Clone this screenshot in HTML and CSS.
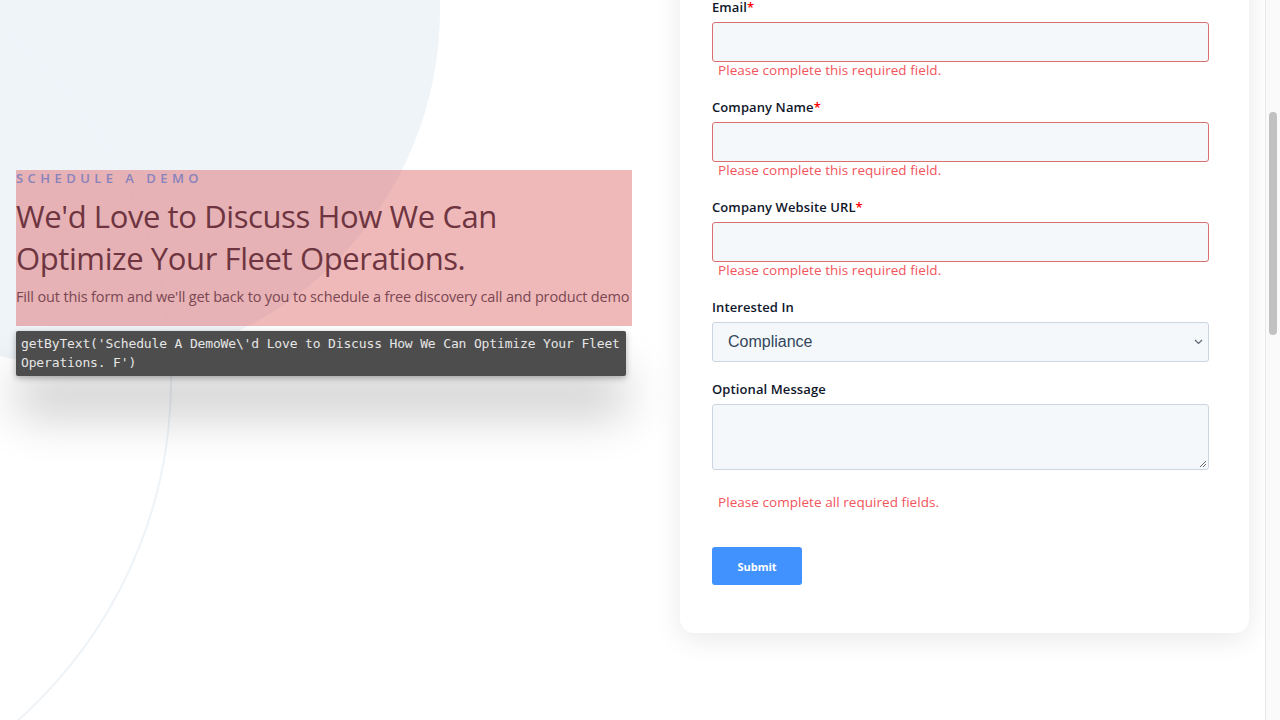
FILE: index.html
```html
<!DOCTYPE html>
<html lang="en">
<head>
<meta charset="utf-8">
<title>Schedule A Demo</title>
<link rel="stylesheet" href="styles.css">
</head>
<body>
<div class="page">
  <main class="main">
    <div class="deco deco-fill"></div>
    <div class="deco deco-ring"></div>

    <section class="intro">
      <div class="intro-text">
        <p class="eyebrow">Schedule A Demo</p>
        <h1 class="title">We'd Love to Discuss How We Can Optimize Your Fleet Operations.</h1>
        <p class="lead">Fill out this form and we'll get back to you to schedule a free discovery call and product demo</p>
      </div>
      <div class="tooltip">getByText('Schedule A DemoWe\'d Love to Discuss How We Can Optimize Your Fleet Operations. F')</div>
    </section>

    <section class="card">
      <form class="form">
        <div class="field">
          <label class="label">Email<span class="req">*</span></label>
          <input class="input input-error" type="email">
          <p class="error">Please complete this required field.</p>
        </div>
        <div class="field">
          <label class="label">Company Name<span class="req">*</span></label>
          <input class="input input-error" type="text">
          <p class="error">Please complete this required field.</p>
        </div>
        <div class="field">
          <label class="label">Company Website URL<span class="req">*</span></label>
          <input class="input input-error" type="text">
          <p class="error">Please complete this required field.</p>
        </div>
        <div class="field field-plain">
          <label class="label">Interested In</label>
          <div class="select">
            <span class="select-value">Compliance</span>
            <svg class="chevron" width="9" height="6" viewBox="0 0 9 6"><path d="M1 1 L4.5 4.5 L8 1" fill="none" stroke="#5b6572" stroke-width="1.2"/></svg>
          </div>
        </div>
        <div class="field field-plain">
          <label class="label">Optional Message</label>
          <div class="textarea">
            <svg class="grip" width="9" height="9" viewBox="0 0 9 9"><path d="M8 2 L2 8 M8 5 L5 8" stroke="#6b6b6b" stroke-width="1"/></svg>
          </div>
        </div>
        <p class="error error-all">Please complete all required fields.</p>
        <button class="submit" type="button">Submit</button>
      </form>
    </section>
  </main>
  <aside class="scrollbar"><div class="thumb"></div></aside>
</div>
</body>
</html>
```

FILE: styles.css
```css
* { box-sizing: border-box; }
html, body { margin: 0; padding: 0; }
body {
  width: 1280px;
  height: 720px;
  overflow: hidden;
  background: #ffffff;
  font-family: "Open Sans", "Liberation Sans", sans-serif;
}
.page {
  display: flex;
  width: 1280px;
  height: 720px;
}
.main {
  position: relative;
  flex: 1;
  display: flex;
  overflow: hidden;
}
.deco {
  position: absolute;
  border-radius: 50%;
  z-index: 0;
}
.deco-fill {
  left: -272px;
  top: -346px;
  width: 712px;
  height: 712px;
  background: #eff4f9;
}
.deco-ring {
  left: -740px;
  top: -76px;
  width: 912px;
  height: 912px;
  border: 2px solid #eef3f8;
}
.intro {
  position: relative;
  z-index: 1;
  width: 680px;
  flex: none;
  padding: 170px 0 0 16px;
}
.intro-text {
  width: 616px;
  height: 156px;
  background: rgba(214, 60, 60, 0.36);
}
.eyebrow {
  margin: 0;
  font-size: 13px;
  line-height: 16px;
  font-weight: 600;
  letter-spacing: 4.45px;
  text-transform: uppercase;
  color: #8882bd;
}
.title {
  margin: 9px 0 0;
  max-width: 540px;
  font-size: 31px;
  line-height: 42px;
  font-weight: 400;
  color: #6e3541;
  letter-spacing: -0.4px;
}
.lead {
  margin: 8px 0 0;
  font-size: 14.5px;
  line-height: 20px;
  color: #7a4753;
  letter-spacing: -0.15px;
  white-space: nowrap;
}
.tooltip {
  margin-top: 5px;
  width: 610px;
  padding: 3px 0 4px 5px;
  background: #4d4d4d;
  color: #e6e6e6;
  border-radius: 2px;
  font-family: "DejaVu Sans Mono", monospace;
  font-size: 13px;
  letter-spacing: -0.15px;
  line-height: 19px;
  box-shadow: 0 40px 48px rgba(0, 0, 0, 0.2), 0 2px 6px rgba(0, 0, 0, 0.3);
}
.card {
  position: relative;
  z-index: 1;
  flex: none;
  width: 569px;
  height: 695px;
  margin-top: -62px;
  background: #ffffff;
  border-radius: 0 0 14px 14px;
  box-shadow: 0 6px 28px rgba(0, 0, 0, 0.09);
  padding: 60px 40px 0 32px;
}
.form {
  display: flex;
  flex-direction: column;
}
.field {
  height: 100px;
  display: flex;
  flex-direction: column;
}
.field-plain { height: auto; margin-bottom: 18px; }
.label {
  display: block;
  font-family: "Open Sans", sans-serif;
  font-size: 13px;
  line-height: 18px;
  font-weight: 600;
  color: #10172a;
  letter-spacing: 0.1px;
  margin-bottom: 6px;
}
.req { color: #ff0000; font-weight: 600; }
.input {
  display: block;
  width: 497px;
  height: 40px;
  margin: 0;
  background: #f5f8fa;
  border: 1px solid #cbd6e2;
  border-radius: 3px;
  font-size: 16px;
}
.input-error { border-color: #d9706f; }
.error {
  margin: -1px 0 0 6px;
  font-size: 13.5px;
  line-height: 18px;
  color: #f2545b;
  letter-spacing: 0.05px;
}
.select {
  width: 497px;
  height: 40px;
  background: #f5f8fa;
  border: 1px solid #cbd6e2;
  border-radius: 3px;
  display: flex;
  align-items: center;
  justify-content: space-between;
  padding: 0 5px 0 15px;
}
.select-value {
  font-family: "Liberation Sans", Arial, sans-serif;
  font-size: 16px;
  color: #33475b;
}
.textarea {
  width: 497px;
  height: 66px;
  background: #f5f8fa;
  border: 1px solid #cbd6e2;
  border-radius: 3px;
  display: flex;
  align-items: flex-end;
  justify-content: flex-end;
  padding: 0 1px 1px 0;
}
.error.error-all { margin-top: 5px; }
.submit {
  margin-top: 36px;
  width: 90px;
  height: 38px;
  background: #4192ff;
  border: none;
  border-radius: 3px;
  color: #ffffff;
  font-family: "Open Sans", sans-serif;
  font-weight: 700;
  font-size: 11px;
  cursor: pointer;
}
.scrollbar {
  width: 15px;
  height: 720px;
  background: #fafafa;
  border-left: 1px solid #e8e8e8;
  padding: 112px 2px 0 3px;
}
.thumb {
  width: 8px;
  height: 223px;
  border-radius: 4px;
  background: #c1c1c1;
}
```
